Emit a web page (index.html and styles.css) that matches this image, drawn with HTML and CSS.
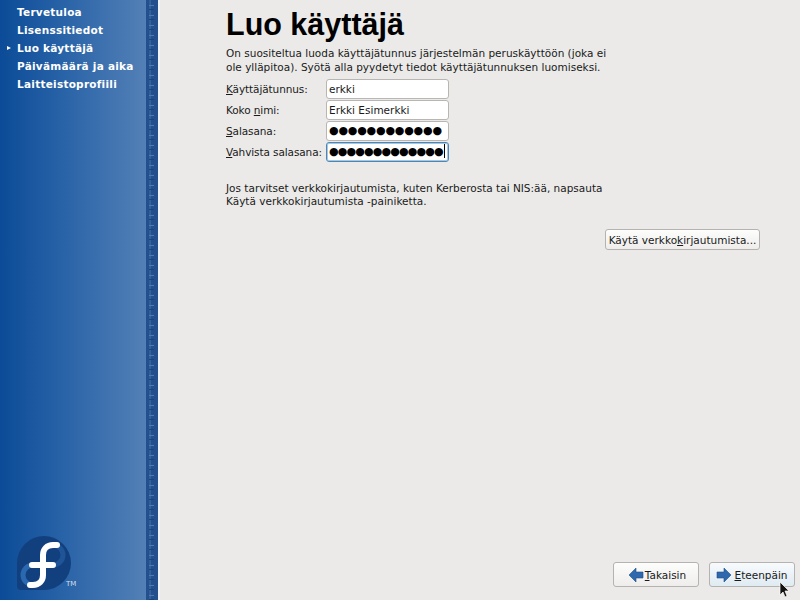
FILE: index.html
```html
<!DOCTYPE html>
<html lang="fi">
<head>
<meta charset="utf-8">
<title>Luo käyttäjä</title>
<link rel="stylesheet" href="styles.css">
</head>
<body>
<div class="screen">
  <aside class="side">
    <div class="side-main">
      <ul class="steps">
        <li>Tervetuloa</li>
        <li>Lisenssitiedot</li>
        <li class="current">Luo käyttäjä</li>
        <li>Päivämäärä ja aika</li>
        <li>Laitteistoprofiili</li>
      </ul>
      <div class="logo">
        <svg class="logo-mark" width="56" height="56" viewBox="0 0 56 56">
          <path d="M28 1A27 27 0 0 1 28 55H5a4 4 0 0 1-4-4V28A27 27 0 0 1 28 1z" fill="#12407f"/>
          <path d="M37 10A10 10 0 0 1 37 30" fill="none" stroke="#1f5597" stroke-width="5"/>
          <path d="M17 30A10 10 0 0 0 17 50" fill="none" stroke="#2a68b0" stroke-width="5"/>
          <path d="M41 10H37C31 10 27 14 27 20V40C27 46 23 50 17 50H14M16 30H37" fill="none" stroke="#fff" stroke-width="6" stroke-linecap="round"/>
        </svg>
        <span class="tm">TM</span>
      </div>
    </div>
    <div class="side-strip"></div>
  </aside>
  <main class="content">
    <h1 class="title">Luo käyttäjä</h1>
    <p class="intro">On suositeltua luoda käyttäjätunnus järjestelmän peruskäyttöön (joka ei<br>ole ylläpitoa). Syötä alla pyydetyt tiedot käyttäjätunnuksen luomiseksi.</p>
    <div class="form">
      <label class="lbl"><u>K</u>äyttäjätunnus:</label><div class="field">erkki</div>
      <label class="lbl">Koko <u>n</u>imi:</label><div class="field">Erkki Esimerkki</div>
      <label class="lbl"><u>S</u>alasana:</label><div class="field dots">●●●●●●●●●●●●</div>
      <label class="lbl"><u>V</u>ahvista salasana:</label><div class="field dots tight focus">●●●●●●●●●●●●●<i class="caret"></i></div>
    </div>
    <p class="note">Jos tarvitset verkkokirjautumista, kuten Kerberosta tai NIS:ää, napsauta<br>Käytä verkkokirjautumista -painiketta.</p>
    <div class="net-row"><button class="btn net">Käytä verkko<u>k</u>irjautumista...</button></div>
    <div class="nav">
      <button class="btn navbtn back">
        <svg width="16" height="16" viewBox="0 0 16 16"><path d="M8 1v4h7v6H8v4L1 8z" fill="#2f68ad" stroke="#1f4f8c" stroke-width=".6"/></svg>
        <span><u>T</u>akaisin</span>
      </button>
      <button class="btn navbtn hover">
        <svg width="16" height="16" viewBox="0 0 16 16"><path d="M8 1v4H1v6h7v4l7-7z" fill="#2f68ad" stroke="#1f4f8c" stroke-width=".6"/></svg>
        <span><u>E</u>teenpäin</span>
      </button>
    </div>
  </main>
  <svg class="cursor" width="12" height="18" viewBox="0 0 12 18"><path d="M1 1v13l3-3 2 5 2-1-2-5h4z" fill="#111" stroke="#fff" stroke-width=".7"/></svg>
</div>
</body>
</html>
```
FILE: styles.css
```css
* { box-sizing: border-box; }
html, body { margin: 0; padding: 0; }
body { width: 800px; height: 600px; overflow: hidden; background: #ebeae8; font-family: "DejaVu Sans", sans-serif; font-size: 10.5px; color: #1a1a1a; }
.screen { position: relative; display: flex; width: 800px; height: 600px; }
.side { display: flex; flex: 0 0 160px; height: 600px; }
.side-main { flex: 0 0 146px; display: flex; flex-direction: column; justify-content: space-between; background: linear-gradient(90deg, #0b4b97 0%, #2a64a8 45%, #5380b6 100%); }
.side-strip { flex: 1; border-right: 2px solid #f1f4f8; background-color: #24508d; background-image: linear-gradient(180deg, #4f7bb1 0 1px, transparent 1px 4px, #1b437d 4px 5px, transparent 5px), linear-gradient(90deg, #2f5f9b 0 1px, #33649f 1px 2px, transparent 2px); background-size: 5px 10px, 12px 100%; background-repeat: repeat-y, no-repeat; background-position: 3px 5px, 3px 0; }
.steps { list-style: none; margin: 0; padding: 3px 0 0 17px; font-weight: bold; color: #fff; letter-spacing: .25px; }
.steps li { position: relative; height: 18px; line-height: 18px; }
.current::before { content: ""; position: absolute; left: -10px; top: 7px; border-left: 4px solid #fff; border-top: 2.500px solid transparent; border-bottom: 2.500px solid transparent; }
.logo { position: relative; margin: 0 0 9px 16px; height: 56px; }
.logo-mark { display: block; }
.tm { position: absolute; left: 50px; top: 45px; font-size: 7px; font-weight: normal; color: #d3deeb; }
.content { flex: 1; display: flex; flex-direction: column; padding: 6px 5px 13px 66px; }
.title { margin: 0; font-family: "Liberation Sans", Arial, sans-serif; font-size: 30.500px; line-height: 37px; font-weight: bold; color: #000; }
.intro { margin: 3px 0 0; line-height: 14px; }
.form { display: grid; grid-template-columns: 100px 123px; grid-auto-rows: 21px; margin-top: 5px; }
.lbl { align-self: center; white-space: nowrap; margin-bottom: 2px; letter-spacing: -.1px; }
.field { height: 20px; line-height: 18px; padding: 0 2px; background: #fff; border: 1px solid #b8b6b2; border-radius: 3px; white-space: nowrap; overflow: hidden; }
.dots { font-size: 11px; color: #000; letter-spacing: -.2px; }
.tight { letter-spacing: -.85px; }
.focus { border-color: #4a87b8; box-shadow: 0 0 0 1px #a9c8df inset; }
.caret { display: inline-block; width: 1px; height: 14px; margin-left: 1px; background: #000; vertical-align: -3px; }
.note { margin: 19px 0 0; line-height: 13px; }
.net-row { display: flex; justify-content: flex-end; margin: 21px 35px 0 0; }
.btn { font: inherit; color: #1a1a1a; background: linear-gradient(180deg, #fdfdfc, #eeedeb); border: 1px solid #b5b3af; border-radius: 3px; padding: 0; white-space: nowrap; }
.net { width: 155px; height: 21px; }
.nav { margin-top: auto; display: flex; justify-content: flex-end; gap: 10px; }
.navbtn { display: flex; align-items: center; justify-content: center; gap: 2px; width: 86px; height: 25px; }
.back { gap: 1px; padding-left: 2px; }
.hover { background: linear-gradient(180deg, #f8fbfd, #dfeaf2); }
.cursor { position: absolute; left: 779px; top: 581px; }
```
